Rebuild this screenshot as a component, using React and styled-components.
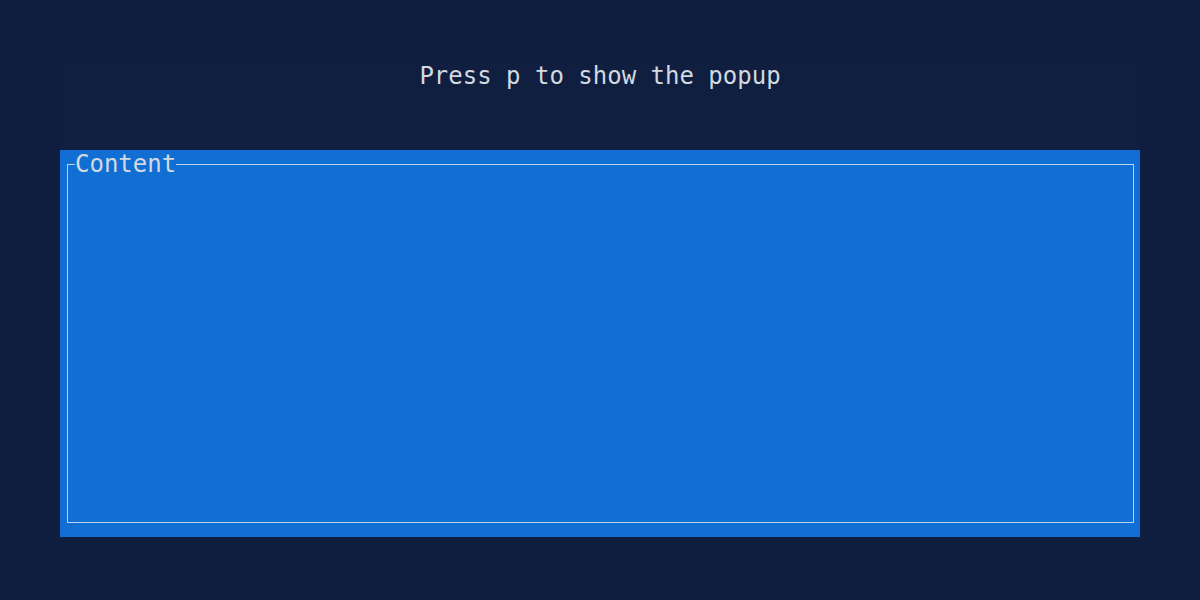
import React from "react";
import styled, { createGlobalStyle } from "styled-components";

const GlobalStyle = createGlobalStyle`
  html, body {
    margin: 0;
    padding: 0;
    background: #0f1e3e;
  }
  body {
    font-family: "DejaVu Sans Mono", "Liberation Mono", monospace;
    color: #d3d9e1;
  }
`;

const Screen = styled.div`
  width: 1200px;
  height: 600px;
  box-sizing: border-box;
  padding: 60px;
  display: flex;
  flex-direction: column;
`;

const Header = styled.header`
  height: 90px;
  box-sizing: border-box;
  padding-top: 4px;
  background: #101f40;
  display: flex;
  justify-content: center;
  align-items: flex-start;
  font-size: 24px;
  line-height: 24px;
`;

const Hint = styled.p`
  margin: 0;
`;

const Panel = styled.section`
  height: 387px;
  box-sizing: border-box;
  padding: 2px 6px 14px 7px;
  background: #116fd3;
  display: flex;
`;

const Frame = styled.fieldset`
  flex: 1;
  margin: 0;
  padding: 0;
  min-width: 0;
  border: 1px solid #b8d0ee;
`;

const Title = styled.legend`
  margin-left: 7px;
  padding: 0;
  font-size: 24px;
  line-height: 24px;
  color: #d3d9e1;
`;

export default function App() {
  return (
    <>
      <GlobalStyle />
      <Screen>
        <Header>
          <Hint>Press p to show the popup</Hint>
        </Header>
        <Panel>
          <Frame>
            <Title>Content</Title>
          </Frame>
        </Panel>
      </Screen>
    </>
  );
}
